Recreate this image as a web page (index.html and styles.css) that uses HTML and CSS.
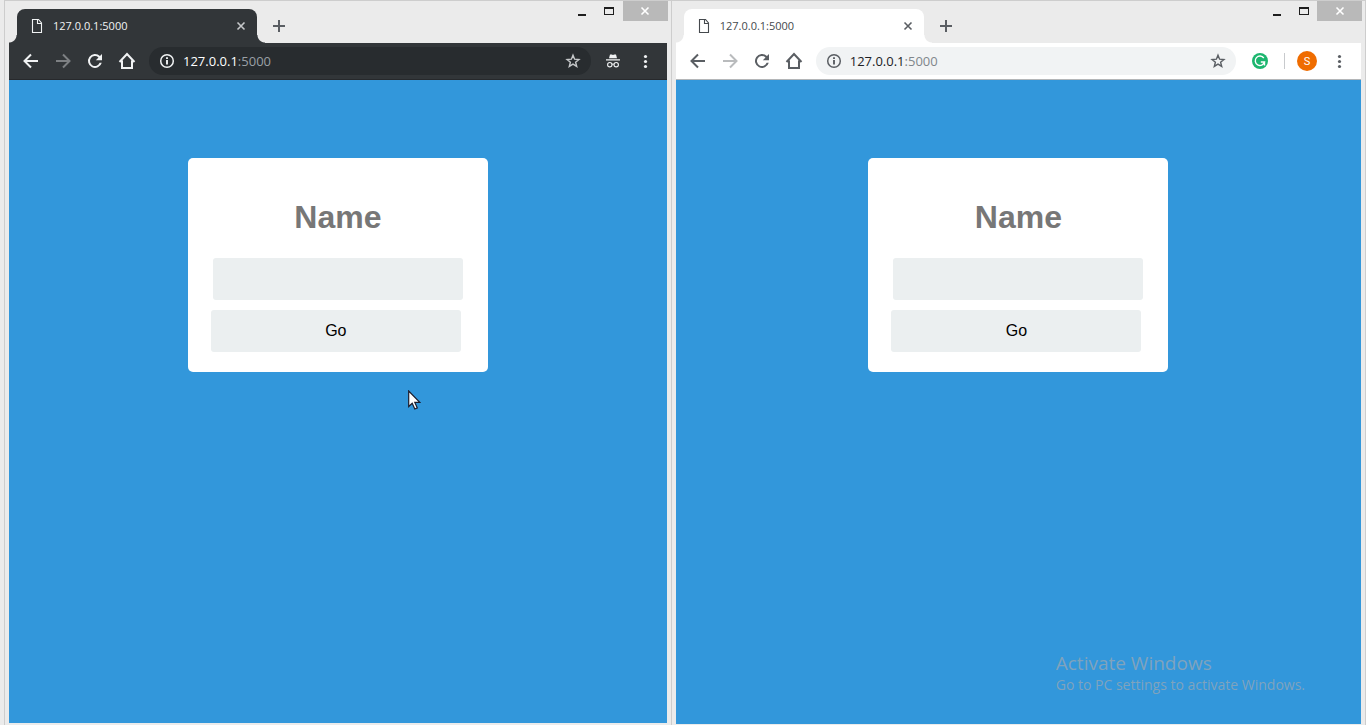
FILE: index.html
```html
<!DOCTYPE html>
<html lang="en">
<head>
<meta charset="utf-8">
<title>127.0.0.1:5000</title>
<link rel="stylesheet" href="styles.css">
</head>
<body>
<svg class="symbols" aria-hidden="true">
  <symbol id="file" viewBox="0 0 16 16"><path d="M3.500 1.500h6l3 3.500v9.500h-9z M8.500 1.500v4h4" fill="none" stroke="currentColor" stroke-width="1.100"/></symbol>
  <symbol id="cross" viewBox="0 0 16 16"><path d="M4.500 4.500l7 7M11.500 4.500l-7 7" fill="none" stroke="currentColor" stroke-width="1.600"/></symbol>
  <symbol id="plus" viewBox="0 0 16 16"><path d="M8 2v12M2 8h12" fill="none" stroke="currentColor" stroke-width="2"/></symbol>
  <symbol id="back" viewBox="0 0 24 24"><path d="M19 12H6M12 5.500L5.500 12l6.500 6.500" fill="none" stroke="currentColor" stroke-width="2"/></symbol>
  <symbol id="forward" viewBox="0 0 24 24"><path d="M5 12h13M12 5.500l6.500 6.500-6.500 6.500" fill="none" stroke="currentColor" stroke-width="2"/></symbol>
  <symbol id="reload" viewBox="0 0 24 24"><path d="M16.950 7.050A7 7 0 1 0 18.760 13.800h-2.100A5 5 0 1 1 15.500 8.500L12.800 11.200H19V5z" fill="currentColor"/></symbol>
  <symbol id="home" viewBox="0 0 24 24"><path d="M4.500 13l7.500-8 7.500 8M7 11.500V19h10v-7.500" fill="none" stroke="currentColor" stroke-width="2"/></symbol>
  <symbol id="info" viewBox="0 0 16 16"><circle cx="8" cy="8" r="6.300" fill="none" stroke="currentColor" stroke-width="1.500"/><path d="M8 7v4.500M8 4.300v1.700" stroke="currentColor" stroke-width="1.900"/></symbol>
  <symbol id="star" viewBox="0 0 16 16"><path d="M8 2.200l1.600 4 4.300.3-3.300 2.700 1.100 4.200L8 11.100l-3.700 2.300 1.100-4.200-3.300-2.700 4.300-.3z" fill="none" stroke="currentColor" stroke-width="1.400"/></symbol>
  <symbol id="incognito" viewBox="0 0 16 16"><path d="M5 1.500h1.800L8 2l1.200-.5H11l1 3.700H4zM1 6.200h14v1.200H1z" fill="currentColor"/><g fill="none" stroke="currentColor" stroke-width="1.100"><circle cx="4.800" cy="11.700" r="2.200"/><circle cx="11.200" cy="11.700" r="2.200"/><path d="M7 11.400q1-.7 2 0"/></g></symbol>
  <symbol id="menu" viewBox="0 0 16 16"><g fill="currentColor"><circle cx="8.500" cy="3.500" r="1.600"/><circle cx="8.500" cy="8.500" r="1.600"/><circle cx="8.500" cy="13.500" r="1.600"/></g></symbol>
  <symbol id="minimise" viewBox="0 0 12 12"><path d="M2 9h8v2H2z" fill="currentColor"/></symbol>
  <symbol id="maximise" viewBox="0 0 12 12"><path d="M1 2h10v8H1zM2 4v5h8V4z" fill="currentColor" fill-rule="evenodd"/></symbol>
</svg>

<main class="desktop">
  <section class="window window-dark" aria-label="Incognito window">
    <header class="tab-strip">
      <div class="tab">
        <svg class="icon"><use href="#file"/></svg>
        <span class="tab-title">127.0.0.1:5000</span>
        <button class="tab-close" aria-label="Close tab"><svg class="icon"><use href="#cross"/></svg></button>
      </div>
      <button class="new-tab" aria-label="New tab"><svg class="icon"><use href="#plus"/></svg></button>
      <div class="controls">
        <button class="control" aria-label="Minimise"><svg><use href="#minimise"/></svg></button>
        <button class="control" aria-label="Maximise"><svg><use href="#maximise"/></svg></button>
        <button class="control control-close" aria-label="Close"><svg class="icon"><use href="#cross"/></svg></button>
      </div>
    </header>
    <nav class="toolbar" aria-label="Navigation">
      <button class="tool" aria-label="Back"><svg><use href="#back"/></svg></button>
      <button class="tool tool-off" aria-label="Forward"><svg><use href="#forward"/></svg></button>
      <button class="tool" aria-label="Reload"><svg><use href="#reload"/></svg></button>
      <button class="tool" aria-label="Home"><svg><use href="#home"/></svg></button>
      <div class="address">
        <svg class="icon"><use href="#info"/></svg>
        <span class="url">127.0.0.1<span class="port">:5000</span></span>
        <button class="bookmark" aria-label="Bookmark"><svg class="icon"><use href="#star"/></svg></button>
      </div>
      <button class="tool" aria-label="Incognito"><svg class="icon"><use href="#incognito"/></svg></button>
      <button class="tool" aria-label="Menu"><svg class="icon"><use href="#menu"/></svg></button>
    </nav>
    <div class="page">
      <form class="card">
        <h1 class="heading"><label for="name-left">Name</label></h1>
        <input class="field" id="name-left" type="text">
        <button class="go" type="button">Go</button>
      </form>
      <svg class="cursor" viewBox="0 0 13 20" aria-hidden="true"><path d="M.7 1v15.500l3.500-3.300 2.600 5.800 2.500-1.100-2.500-5.500h5z" fill="#fff" stroke="#1b1b2b" stroke-width="1.200"/></svg>
    </div>
  </section>

  <section class="window window-light" aria-label="Browser window">
    <header class="tab-strip">
      <div class="tab">
        <svg class="icon"><use href="#file"/></svg>
        <span class="tab-title">127.0.0.1:5000</span>
        <button class="tab-close" aria-label="Close tab"><svg class="icon"><use href="#cross"/></svg></button>
      </div>
      <button class="new-tab" aria-label="New tab"><svg class="icon"><use href="#plus"/></svg></button>
      <div class="controls">
        <button class="control" aria-label="Minimise"><svg><use href="#minimise"/></svg></button>
        <button class="control" aria-label="Maximise"><svg><use href="#maximise"/></svg></button>
        <button class="control control-close" aria-label="Close"><svg class="icon"><use href="#cross"/></svg></button>
      </div>
    </header>
    <nav class="toolbar" aria-label="Navigation">
      <button class="tool" aria-label="Back"><svg><use href="#back"/></svg></button>
      <button class="tool tool-off" aria-label="Forward"><svg><use href="#forward"/></svg></button>
      <button class="tool" aria-label="Reload"><svg><use href="#reload"/></svg></button>
      <button class="tool" aria-label="Home"><svg><use href="#home"/></svg></button>
      <div class="address">
        <svg class="icon"><use href="#info"/></svg>
        <span class="url">127.0.0.1<span class="port">:5000</span></span>
        <button class="bookmark" aria-label="Bookmark"><svg class="icon"><use href="#star"/></svg></button>
      </div>
      <button class="tool tool-extension" aria-label="Grammarly">
        <svg class="icon" viewBox="0 0 16 16"><circle cx="8" cy="8" r="8" fill="#1cb66f"/><path d="M11.800 5A4.700 4.700 0 1 0 12.500 9H8.800M12.500 8.800v3.700" fill="none" stroke="#fff" stroke-width="1.400"/></svg>
      </button>
      <span class="divider"></span>
      <button class="tool" aria-label="Profile"><span class="avatar">S</span></button>
      <button class="tool" aria-label="Menu"><svg class="icon"><use href="#menu"/></svg></button>
    </nav>
    <div class="page">
      <form class="card">
        <h1 class="heading"><label for="name-right">Name</label></h1>
        <input class="field" id="name-right" type="text">
        <button class="go" type="button">Go</button>
      </form>
      <aside class="watermark">
        <p class="watermark-title">Activate Windows</p>
        <p class="watermark-text">Go to PC settings to activate Windows.</p>
      </aside>
    </div>
  </section>
</main>
</body>
</html>
```
FILE: styles.css
```css
* { box-sizing: border-box; }

body {
  margin: 0;
  background: #ebebeb;
  font-family: "Open Sans", "Noto Sans", sans-serif;
}

button {
  display: flex;
  align-items: center;
  justify-content: center;
  padding: 0;
  border: 0;
  background: none;
  color: inherit;
  font: inherit;
}

svg { display: block; flex: none; }
.symbols { display: none; }
.icon { width: 16px; height: 16px; }

.desktop {
  display: flex;
  min-height: 100vh;
  padding-left: 4px;
}

.window {
  display: flex;
  flex-direction: column;
  min-width: 0;
  padding: 0 4px;
  border-top: 1px solid #cdcdcd;
  border-left: 1px solid #cdcdcd;
}

.window-dark {
  flex: 667 1 0;
  padding-bottom: 2px;
  --bar: #323639;
  --pill: #282c2f;
  --icon: #f1f3f4;
  --off: #7d8083;
  --title: #f1f3f4;
  --url: #ffffff;
  --port: #9aa0a6;
  --soft: #c6c8ca;
  --line: #27292c;
}

.window-light {
  flex: 695 1 0;
  padding-bottom: 1px;
  border-right: 1px solid #cdcdcd;
  --bar: #ffffff;
  --pill: #f1f3f4;
  --icon: #5a5e63;
  --off: #b9bbbd;
  --title: #45494d;
  --url: #202124;
  --port: #80868b;
  --soft: #5a5e63;
  --line: #b4b6b8;
}

.tab-strip {
  display: flex;
  align-items: flex-end;
  height: 42px;
  padding-left: 8px;
}

.tab {
  position: relative;
  display: flex;
  flex: 0 1 240px;
  align-items: center;
  gap: 8px;
  height: 34px;
  padding: 0 8px 0 12px;
  border-radius: 8px 8px 0 0;
  background: var(--bar);
  color: var(--title);
  font-size: 11px;
  line-height: 16px;
}

.tab::before,
.tab::after {
  content: "";
  position: absolute;
  bottom: 0;
  width: 8px;
  height: 8px;
}

.tab::before {
  left: -8px;
  background: radial-gradient(circle at 0 0, transparent 7px, var(--bar) 8px);
}

.tab::after {
  right: -8px;
  background: radial-gradient(circle at 100% 0, transparent 7px, var(--bar) 8px);
}

.tab-title { flex: 1; }
.tab-close { color: var(--soft); }

.new-tab {
  width: 28px;
  height: 34px;
  margin-left: 8px;
  color: #5a5e63;
}

.controls {
  display: flex;
  align-self: flex-start;
  height: 20px;
  margin-left: auto;
  margin-right: -1px;
  color: #1e1e1e;
}

.control { width: 27px; }
.control svg { width: 12px; height: 12px; }

.control-close {
  width: 45px;
  background: #b9b9b9;
  color: #fff;
}

.control-close svg { width: 16px; height: 16px; }

.toolbar {
  display: flex;
  align-items: center;
  gap: 8px;
  height: 37px;
  padding: 0 10px;
  border-bottom: 1px solid var(--line);
  background: var(--bar);
  color: var(--icon);
}

.tool {
  flex: none;
  width: 24px;
  height: 24px;
}

.tool > svg:not(.icon) { width: 24px; height: 24px; }
.tool-off { color: var(--off); }
.tool-extension { width: 28px; }

.address {
  display: flex;
  flex: 1;
  align-items: center;
  gap: 8px;
  min-width: 0;
  height: 28px;
  margin: 0 2px;
  padding: 0 10px;
  border-radius: 14px;
  background: var(--pill);
}

.url {
  flex: 1;
  color: var(--url);
  font-size: 13px;
  line-height: 20px;
}

.port { color: var(--port); }
.bookmark { color: var(--soft); }

.divider {
  width: 1px;
  height: 16px;
  margin: 0 2px;
  background: #c8cacd;
}

.avatar {
  width: 20px;
  height: 20px;
  border-radius: 50%;
  background: #ef6c00;
  color: #fff;
  font-family: Roboto, sans-serif;
  font-size: 11px;
  line-height: 21px;
}

.page {
  position: relative;
  flex: 1;
  padding-top: 78px;
  background: #3297db;
  font-family: "Liberation Sans", Arial, sans-serif;
}

.card {
  display: flex;
  flex-direction: column;
  align-items: center;
  width: 300px;
  margin: 0 auto;
  padding: 20px;
  border-radius: 5px;
  background: #fff;
}

.heading {
  margin: 21px 0 22px;
  color: #777;
  font-size: 32px;
  line-height: 37px;
}

.field,
.go {
  width: 250px;
  height: 42px;
  border: 0;
  border-radius: 3px;
  background: #ebeff0;
  font-size: 16px;
}

.field { padding: 0 12px; }

.go {
  margin: 10px 4px 0 0;
  color: #000;
}

.cursor {
  position: absolute;
  top: 310px;
  left: 399px;
  width: 13px;
  height: 20px;
}

.watermark {
  position: absolute;
  right: 56px;
  bottom: 29px;
  color: #7fa3bd;
  font-family: "Open Sans", "Noto Sans", sans-serif;
}

.watermark p { margin: 0; }
.watermark-title { font-size: 19px; line-height: 24px; }
.watermark-text { font-size: 14px; line-height: 20px; }
```
